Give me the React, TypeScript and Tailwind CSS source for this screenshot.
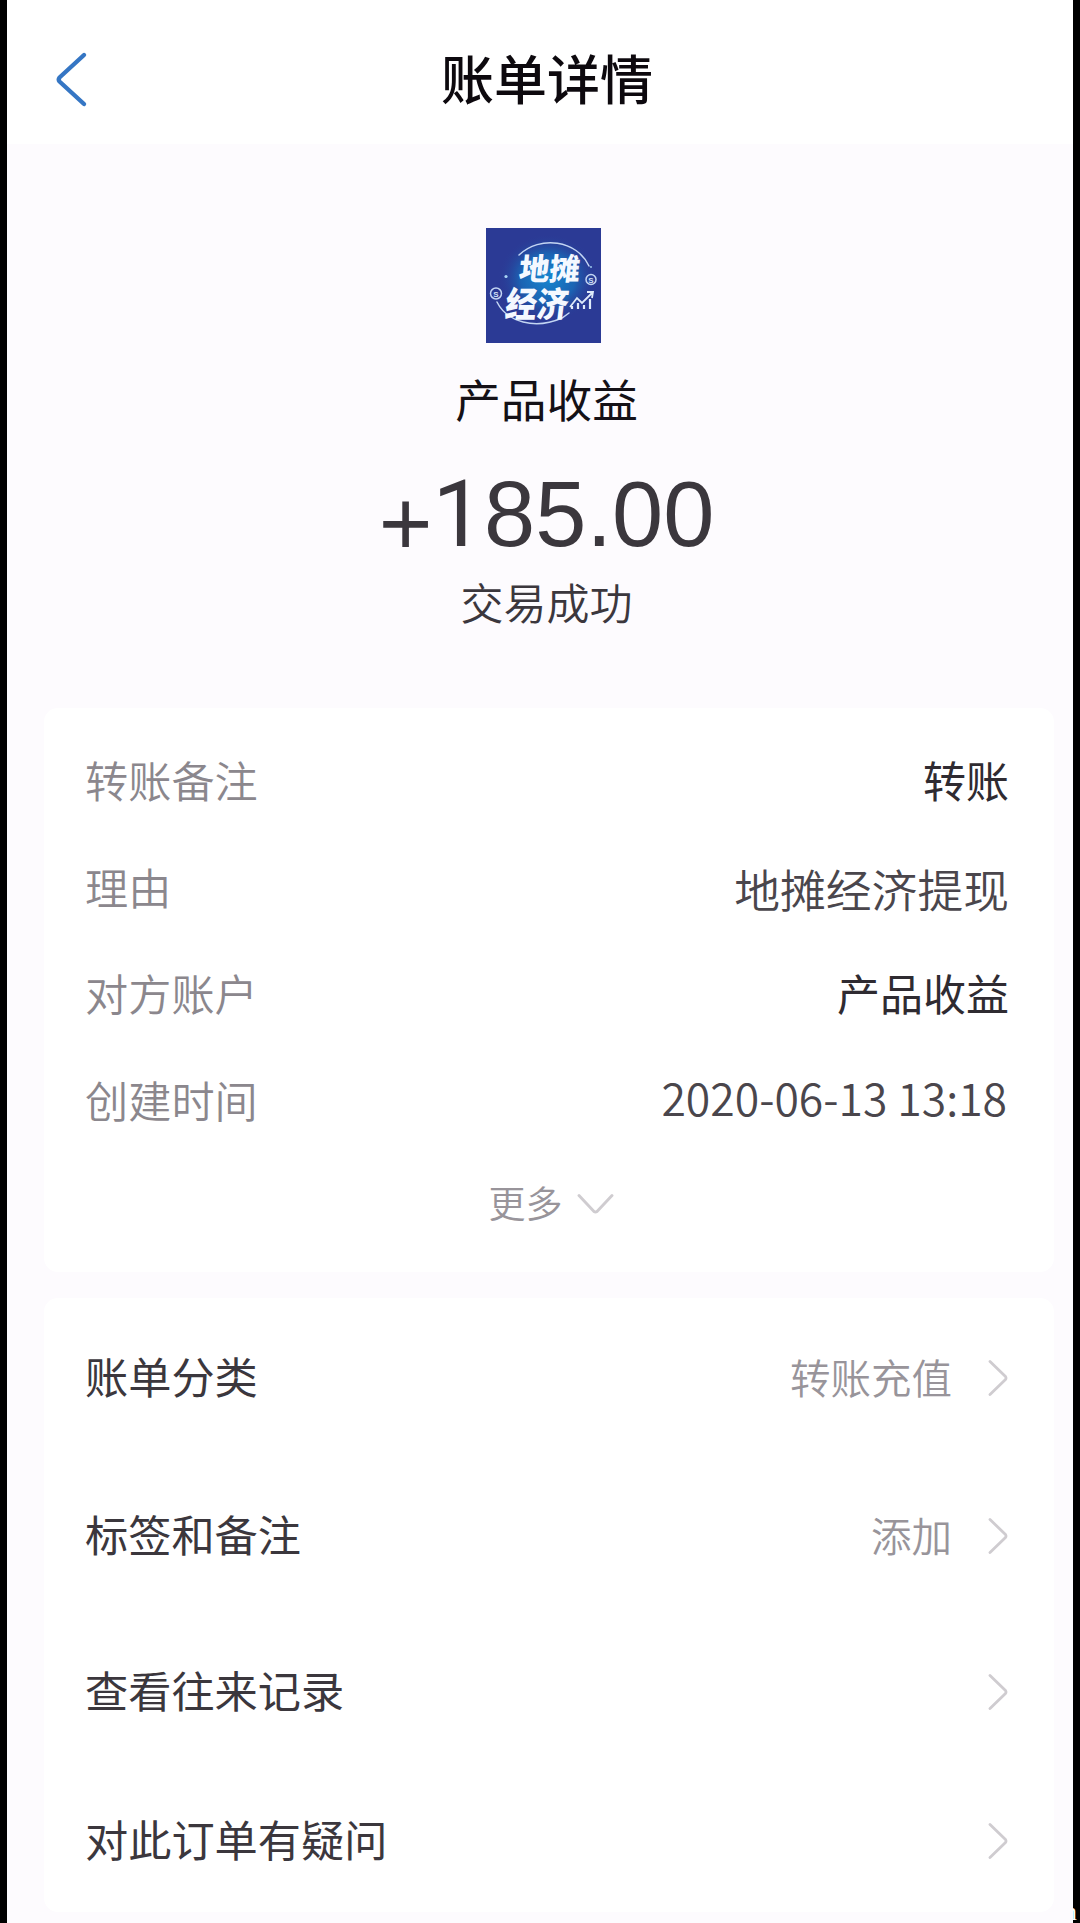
function Chevron() {
  return (
    <svg className="mt-px mr-px ml-[36px] h-[38px] w-[20px] shrink-0" viewBox="0 0 20 38" fill="none" stroke="#cfccd0" strokeWidth="2.8" strokeLinecap="round" strokeLinejoin="round">
      <path d="M2 2.500 L17.500 17.500 Q18.500 19 17.500 20.500 L2 35.500" />
    </svg>
  );
}

function Logo() {
  return (
    <svg className="h-[115px] w-[115px]" viewBox="0 0 115 115" fill="none">
      <defs>
        <radialGradient id="glow">
          <stop offset="0" stopColor="#1686cf" />
          <stop offset="0.55" stopColor="#1b63b3" />
          <stop offset="1" stopColor="#2b3a95" stopOpacity="0" />
        </radialGradient>
      </defs>
      <rect width="115" height="115" fill="#2b3a95" />
      <ellipse cx="62" cy="50" rx="50" ry="44" fill="url(#glow)" />
      <g stroke="#c3d5f3" strokeWidth="1.5" strokeLinecap="round">
        <path d="M33 27 C54 7 91 12 103 38" />
        <path d="M11 74 C21 94 49 102 76 90 L83 85" />
        <circle cx="10" cy="65.500" r="5.500" />
        <circle cx="105" cy="51.500" r="5" />
      </g>
      <circle cx="20" cy="48.500" r="1.600" fill="#a9d5f5" />
      <circle cx="105" cy="39" r="0.900" fill="#a9d5f5" />
      <g fill="#d5e2f7" fontFamily="Liberation Sans, sans-serif" fontWeight="700" fontSize="8" textAnchor="middle">
        <text x="10" y="68.500">S</text>
        <text x="105" y="54.500">S</text>
      </g>
      <g fontFamily="Noto Sans CJK SC, sans-serif" fontWeight="900" fill="#f4f8ff">
        <text transform="translate(32 52) skewX(-6)" fontSize="30.5">地摊</text>
        <text transform="translate(18 89) skewX(-7) scale(0.9 1)" fontSize="35">经济</text>
      </g>
      <path d="M84 79 L91 70 L96 75 L106 65 M101 64 L107 64 L106 70" stroke="#dfeafa" strokeWidth="1.800" />
      <path d="M86 81 V78 M92 81 V75 M98 81 V77 M104 81 V71" stroke="#dfeafa" strokeWidth="2.200" />
    </svg>
  );
}

const details = [
  { label: "转账备注", value: "转账", style: "text-[43px] text-[#2f2b31]" },
  { label: "理由", value: "地摊经济提现", style: "mt-[4px] text-[45.800px] font-[350] text-[#4a464c]" },
  { label: "对方账户", value: "产品收益", style: "text-[43px] text-[#2f2b31]" },
  { label: "创建时间", value: "2020-06-13 13:18", style: "mr-[2px] -mt-[3px] text-[44.500px] font-[350] text-[#4a464c]" },
];

const actions = [
  { label: "账单分类", value: "转账充值", height: "h-[158px]" },
  { label: "标签和备注", value: "添加", height: "h-[158px]" },
  { label: "查看往来记录", value: "", height: "h-[154px]" },
  { label: "对此订单有疑问", value: "", height: "h-[144px]" },
];

export default function App() {
  return (
    <div className="relative h-[1923px] w-[1080px] overflow-hidden bg-black px-[7px] font-['Noto_Sans_CJK_SC',sans-serif]">
      <span className="absolute right-[3px] bottom-[-2px] font-['Liberation_Serif',serif] text-[26px] leading-[26px] text-white">n</span>
      <main className="relative h-[1923px] bg-[#fdfbfe]">
        <header className="grid h-[144px] grid-cols-[100px_1fr_86px] items-center bg-white">
          <svg className="mt-[15px] ml-[47px] h-[58px] w-[34px]" viewBox="0 0 34 58" fill="none" stroke="#3576c4" strokeWidth="4.4" strokeLinecap="round" strokeLinejoin="round">
            <path d="M30 4 L5.500 26.500 Q4 28.500 5.500 30.500 L30 53" />
          </svg>
          <h1 className="mt-[10px] text-center text-[53px] leading-[60px] font-medium text-[#0d090e]">账单详情</h1>
        </header>

        <section className="flex h-[564px] flex-col items-center pt-[84px] pl-[13px]">
          <div className="-ml-[7px]">
            <Logo />
          </div>
          <div className="mt-[21px] text-[45.700px] leading-[68px] text-[#151117]">产品收益</div>
          <div className="mt-[36px] font-['Liberation_Sans',sans-serif] text-[92px] leading-[92px] text-[#3b373d]">
            <span className="relative top-[9px]">+</span>
            <span className="font-['Roboto',sans-serif] leading-none">1</span>85.00
          </div>
          <div className="mt-[8px] text-[43px] leading-[64px] font-[350] text-[#3b373d]">交易成功</div>
        </section>

        <section className="mr-[19px] ml-[37px] h-[564px] rounded-[14px] bg-white pt-[18px] pr-[45px] pl-[41px]">
          {details.map((d) => (
            <div key={d.label} className="flex h-[106.500px] items-center justify-between leading-[64px]">
              <span className="text-[43.200px] font-[350] text-[#8b878d]">{d.label}</span>
              <span className={d.style}>{d.value}</span>
            </div>
          ))}
          <div className="flex h-[100px] items-center justify-center pl-[8px]">
            <span className="text-[37px] leading-[60px] font-[350] text-[#98949a]">更多</span>
            <svg className="mt-[3px] ml-[14px] h-[22px] w-[37px]" viewBox="0 0 37 22" fill="none" stroke="#cfccd0" strokeWidth="2.900" strokeLinecap="round" strokeLinejoin="round">
              <path d="M2 2.500 L17 18.500 Q18.500 19.500 20 18.500 L35 2.500" />
            </svg>
          </div>
        </section>

        <section className="mt-[26px] mr-[19px] ml-[37px] h-[614px] rounded-[14px] bg-white pr-[45px] pl-[41px]">
          {actions.map((a) => (
            <div key={a.label} className={`flex items-center leading-[64px] ${a.height}`}>
              <span className="-mt-[4px] grow text-[43.200px] text-[#3b373d]">{a.label}</span>
              <span className="-mt-px text-[40.500px] font-[350] text-[#98949a]">{a.value}</span>
              <Chevron />
            </div>
          ))}
        </section>
      </main>
    </div>
  );
}
